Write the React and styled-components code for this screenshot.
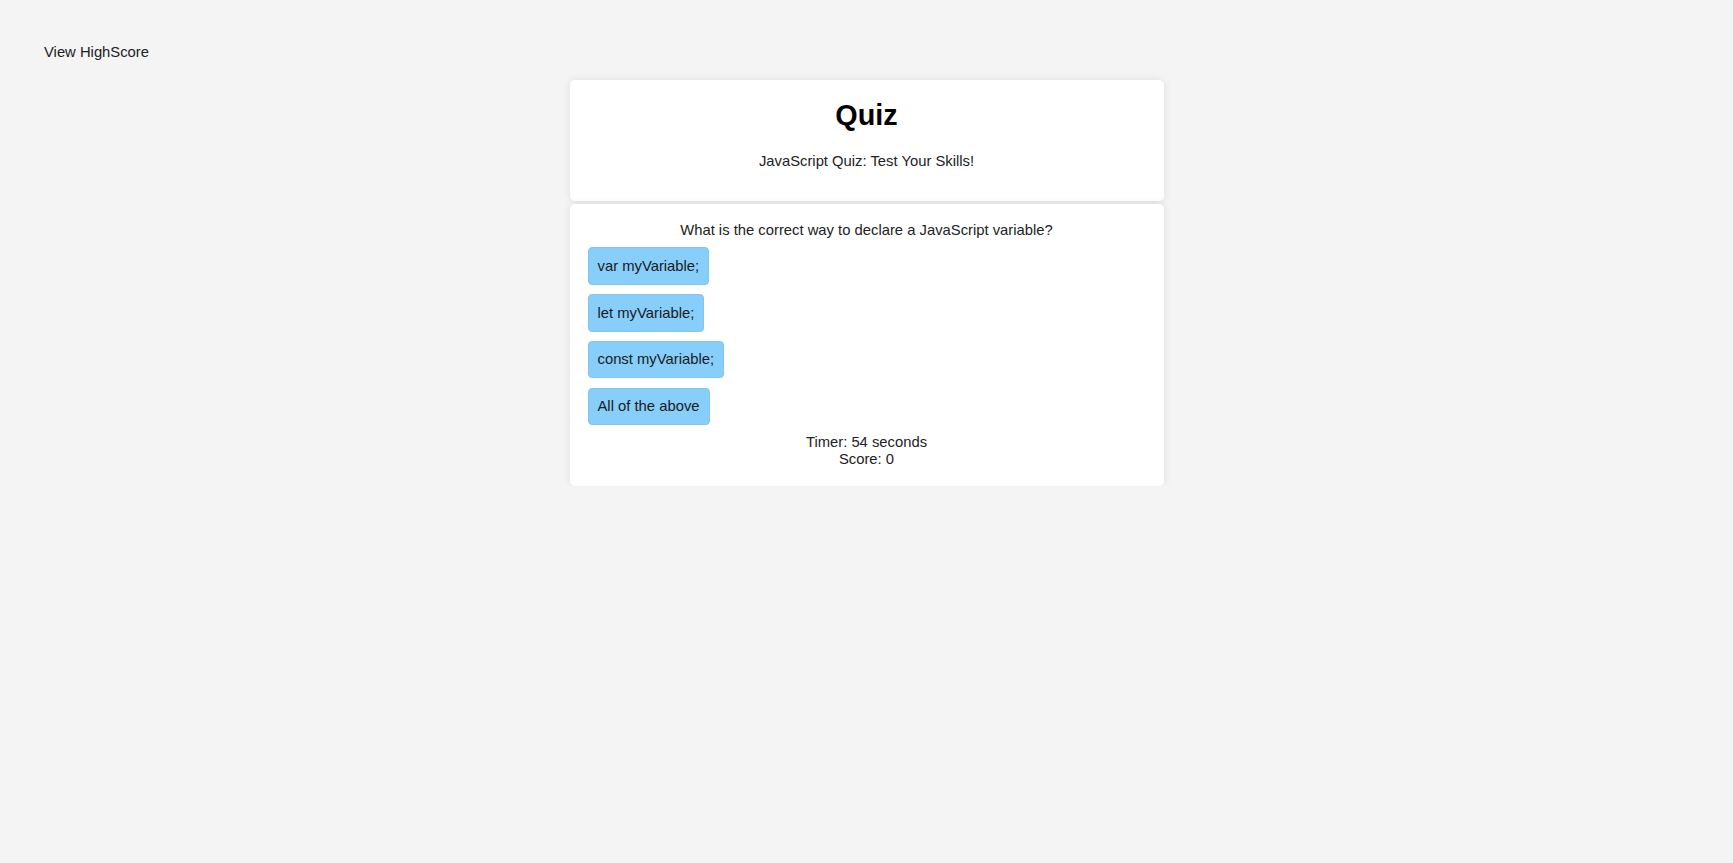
import React, { useState } from "react";
import styled, { createGlobalStyle } from "styled-components";

const GlobalStyle = createGlobalStyle`
  html, body {
    margin: 0;
    padding: 0;
    background: #f4f4f4;
    font-family: "Liberation Sans", Arial, sans-serif;
    font-size: 14.8px;
    color: #222;
  }
`;

const Page = styled.div`
  display: flex;
  flex-direction: column;
  padding: 44px 0 0;
`;

const TopBar = styled.div`
  padding: 0 44px;
  line-height: 16.5px;
  margin-bottom: 19.5px;
`;

const HighScoreLink = styled.a`
  color: #222;
  text-decoration: none;
  cursor: pointer;
`;

const Main = styled.div`
  width: 594px;
  margin: 0 auto;
  display: flex;
  flex-direction: column;
  gap: 3px;
`;

const Card = styled.section`
  background: #fff;
  border-radius: 5px;
  box-shadow: 0 0 9px rgba(0, 0, 0, 0.09);
  padding: ${(p) => p.$pad || "18px"};
  display: flex;
  flex-direction: column;
  align-items: ${(p) => (p.$center ? "center" : "flex-start")};
  gap: ${(p) => p.$gap || "0px"};
`;

const Title = styled.h1`
  margin: 0 0 21px;
  font-size: 28.8px;
  line-height: 33px;
  font-weight: 700;
  color: #000;
`;

const Subtitle = styled.p`
  margin: 0 0 13px;
  line-height: 16.5px;
`;

const Question = styled.p`
  margin: 0 0 0.3px;
  align-self: stretch;
  text-align: center;
  line-height: 16.5px;
`;

const Choice = styled.button`
  font-family: inherit;
  font-size: 14.8px;
  line-height: 16.5px;
  color: #1a1a1a;
  background: #87cefa;
  border: 1px solid #82c6f0;
  border-radius: 4px;
  padding: 9.5px 9px;
  cursor: pointer;

  &:hover {
    background: #7cc4f2;
  }
`;

const Status = styled.div`
  align-self: stretch;
  text-align: center;
  line-height: 16.5px;
  margin-top: 0.2px;
`;

const choices = [
  "var myVariable;",
  "let myVariable;",
  "const myVariable;",
  "All of the above",
];

export default function App() {
  const [score, setScore] = useState(0);

  return (
    <Page>
      <GlobalStyle />
      <TopBar>
        <HighScoreLink>View HighScore</HighScoreLink>
      </TopBar>
      <Main>
        <Card $center $pad="19px 18px 18px">
          <Title>Quiz</Title>
          <Subtitle>JavaScript Quiz: Test Your Skills!</Subtitle>
        </Card>
        <Card $gap="9.2px" $pad="18px 18px 19px">
          <Question>What is the correct way to declare a JavaScript variable?</Question>
          {choices.map((c, i) => (
            <Choice key={i} onClick={() => i === 3 && setScore(score + 1)}>
              {c}
            </Choice>
          ))}
          <Status>
            Timer: 54 seconds
            <br />
            Score: {score}
          </Status>
        </Card>
      </Main>
    </Page>
  );
}
